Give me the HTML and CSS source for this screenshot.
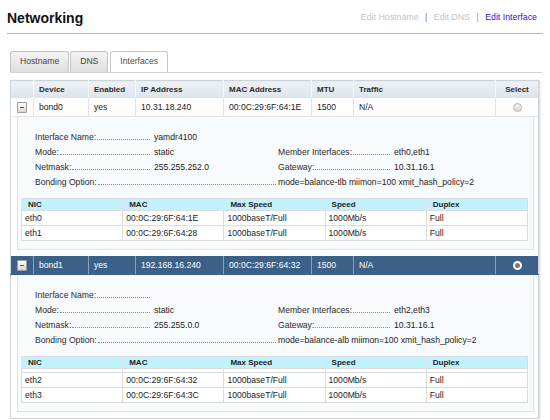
FILE: index.html
```html
<!DOCTYPE html>
<html lang="en">
<head>
    <meta charset="UTF-8">
    <title>Networking</title>
    <link rel="stylesheet" href="styles.css">
</head>
<body>
<div class="page">

    <!-- title + edit links -->
    <div class="page-header">
        <h1>Networking</h1>
        <div class="actions">
            <a class="off">Edit Hostname</a>
            <span class="sep sep-green">|</span>
            <a class="off">Edit DNS</a>
            <span class="sep sep-orange">|</span>
            <a class="on">Edit Interface</a>
        </div>
    </div>

    <!-- tabs -->
    <div class="tabs">
        <div class="tab">Hostname</div>
        <div class="tab">DNS</div>
        <div class="tab active">Interfaces</div>
    </div>

    <!-- interfaces -->
    <table class="iface-table">
        <colgroup>
            <col style="width:23px">
            <col style="width:55px">
            <col style="width:47px">
            <col style="width:88px">
            <col style="width:88px">
            <col style="width:42px">
            <col style="width:142px">
            <col style="width:43px">
        </colgroup>
        <thead>
            <tr>
                <th></th>
                <th>Device</th>
                <th>Enabled</th>
                <th>IP Address</th>
                <th>MAC Address</th>
                <th>MTU</th>
                <th>Traffic</th>
                <th class="center">Select</th>
            </tr>
        </thead>
        <tbody>
            <tr class="dev-row">
                <td class="center"><span class="toggle"></span></td>
                <td>bond0</td>
                <td>yes</td>
                <td>10.31.18.240</td>
                <td>00:0C:29:6F:64:1E</td>
                <td>1500</td>
                <td>N/A</td>
                <td class="center"><span class="radio"></span></td>
            </tr>
            <tr class="detail-row">
                <td colspan="8">
                    <div class="detail">
                        <div class="info">
                            <div class="info-row">
                                <div class="lbl">Interface Name:<i></i></div>
                                <div class="val">yamdr4100</div>
                            </div>
                            <div class="info-row">
                                <div class="lbl">Mode:<i></i></div>
                                <div class="val">static</div>
                                <div class="lbl">Member Interfaces:<i></i></div>
                                <div class="val">eth0,eth1</div>
                            </div>
                            <div class="info-row">
                                <div class="lbl">Netmask:<i></i></div>
                                <div class="val">255.255.252.0</div>
                                <div class="lbl">Gateway:<i></i></div>
                                <div class="val">10.31.16.1</div>
                            </div>
                            <div class="info-row">
                                <div class="lbl wide">Bonding Option:<i></i></div>
                                <div class="val wide">mode=balance-tlb miimon=100 xmit_hash_policy=2</div>
                            </div>
                        </div>
                        <table class="nic-table">
                            <thead>
                                <tr><th>NIC</th><th>MAC</th><th>Max Speed</th><th>Speed</th><th>Duplex</th></tr>
                            </thead>
                            <tbody>
                                <tr><td>eth0</td><td>00:0C:29:6F:64:1E</td><td>1000baseT/Full</td><td>1000Mb/s</td><td>Full</td></tr>
                                <tr><td>eth1</td><td>00:0C:29:6F:64:28</td><td>1000baseT/Full</td><td>1000Mb/s</td><td>Full</td></tr>
                            </tbody>
                        </table>
                    </div>
                </td>
            </tr>

            <tr class="dev-row selected">
                <td class="center"><span class="toggle"></span></td>
                <td>bond1</td>
                <td>yes</td>
                <td>192.168.16.240</td>
                <td>00:0C:29:6F:64:32</td>
                <td>1500</td>
                <td>N/A</td>
                <td class="center"><span class="radio checked"></span></td>
            </tr>
            <tr class="detail-row">
                <td colspan="8">
                    <div class="detail">
                        <div class="info">
                            <div class="info-row">
                                <div class="lbl">Interface Name:<i></i></div>
                                <div class="val"></div>
                            </div>
                            <div class="info-row">
                                <div class="lbl">Mode:<i></i></div>
                                <div class="val">static</div>
                                <div class="lbl">Member Interfaces:<i></i></div>
                                <div class="val">eth2,eth3</div>
                            </div>
                            <div class="info-row">
                                <div class="lbl">Netmask:<i></i></div>
                                <div class="val">255.255.0.0</div>
                                <div class="lbl">Gateway:<i></i></div>
                                <div class="val">10.31.16.1</div>
                            </div>
                            <div class="info-row">
                                <div class="lbl wide">Bonding Option:<i></i></div>
                                <div class="val wide">mode=balance-alb miimon=100 xmit_hash_policy=2</div>
                            </div>
                        </div>
                        <table class="nic-table">
                            <thead>
                                <tr><th>NIC</th><th>MAC</th><th>Max Speed</th><th>Speed</th><th>Duplex</th></tr>
                            </thead>
                            <tbody>
                                <tr class="spacer"><td></td><td></td><td></td><td></td><td></td></tr>
                                <tr><td>eth2</td><td>00:0C:29:6F:64:32</td><td>1000baseT/Full</td><td>1000Mb/s</td><td>Full</td></tr>
                                <tr><td>eth3</td><td>00:0C:29:6F:64:3C</td><td>1000baseT/Full</td><td>1000Mb/s</td><td>Full</td></tr>
                            </tbody>
                        </table>
                    </div>
                </td>
            </tr>
        </tbody>
    </table>

</div>
</body>
</html>
```

FILE: styles.css
```css
body {
    margin: 0;
    background: #ffffff;
    font-family: 'Liberation Sans', Arial, sans-serif;
    font-size: 8.6px;
    color: #222222;
}

.page {
    width: 536px;
    padding: 0 7px;
}

/* header */
.page-header {
    display: flex;
    justify-content: space-between;
    align-items: flex-start;
    height: 33px;
    border-bottom: 1px solid #b4b4b4;
}

h1 {
    margin: 10px 0 0 0;
    font-size: 14px;
    line-height: 16px;
    color: #111111;
}

.actions {
    margin: 12px 6px 0 0;
    line-height: 10px;
    font-size: 8.8px;
}

.actions a.off {
    color: #c4c4c4;
}

.actions a.on {
    color: #1a1ae0;
}

.sep {
    margin: 0 4px;
}

.sep-green {
    color: #6f7d26;
}

.sep-orange {
    color: #d39032;
}

/* tabs */
.tabs {
    display: flex;
    align-items: flex-end;
    margin: 17px 1px 0 3px;
    border-bottom: 1px solid #d4d4d4;
}

.tab {
    height: 20px;
    line-height: 18px;
    padding: 0 9px;
    margin-right: 1px;
    border: 1px solid #c6c6c6;
    border-bottom: none;
    border-radius: 3px 3px 0 0;
    background: linear-gradient(#f4f4f4, #dedede);
    color: #444444;
}

.tab + .tab.active {
    margin-left: 1px;
}

.tab.active {
    background: #ffffff;
    color: #5a4c40;
}

/* interface table */
.iface-table {
    width: 528px;
    margin: 7px 0 0 3px;
    border-collapse: collapse;
    table-layout: fixed;
    border: 1px solid #cdd5dc;
    box-shadow: 1px 1px 2px rgba(0, 0, 0, 0.18);
}

.iface-table > thead th {
    height: 17px;
    padding: 0 5px;
    text-align: left;
    font-size: 8px;
    color: #2a2a2a;
    background: linear-gradient(#eef2f6, #dbe3eb);
    border-left: 1px solid #f6f8fa;
}

.iface-table > thead th:first-child {
    border-left: none;
}

.center {
    text-align: center !important;
}

.dev-row td {
    height: 18px;
    padding: 0 5px;
    border-left: 1px solid #e2e2e2;
    border-bottom: 1px solid #e2e2e2;
    white-space: nowrap;
}

.dev-row td:first-child {
    border-left: none;
    padding: 0;
}

.dev-row.selected td {
    background: #3b6189;
    color: #ffffff;
    border-left-color: #8aa1b9;
    border-bottom-color: #3b6189;
}

.toggle {
    display: inline-block;
    position: relative;
    width: 8px;
    height: 9px;
    vertical-align: middle;
    border: 1px solid #9c9c9c;
    border-radius: 1px;
    background: linear-gradient(#ffffff, #d8d8d8);
}

.toggle::after {
    content: "";
    position: absolute;
    left: 2px;
    top: 4px;
    width: 4px;
    height: 1px;
    background: #555555;
}

.radio {
    display: inline-block;
    width: 7px;
    height: 7px;
    vertical-align: middle;
    border: 1px solid #b9b9b9;
    border-radius: 50%;
    background: linear-gradient(#f2f2f2, #d9d9d9);
}

.radio.checked {
    width: 5px;
    height: 5px;
    border: 2px solid #ffffff;
    background: #7a7a7a;
}

/* detail panel */
.detail-row td {
    padding: 0 4px 6px 6px;
}

.detail {
    padding: 13px 5px 8px 3px;
    border: 1px solid #dce3e9;
    border-top: none;
    background: #f8fbfd;
}

.info {
    margin: 0 0 8px 14px;
}

.info-row {
    display: grid;
    grid-template-columns: 119px 124px 116px 1fr;
    line-height: 15px;
}

.lbl {
    display: flex;
    align-items: baseline;
    padding-right: 4px;
    white-space: nowrap;
    color: #2a2a2a;
}

.lbl i {
    flex: 1;
    height: 0;
    margin-left: 1px;
    border-bottom: 1px dotted #8a8a8a;
}

.lbl.wide {
    grid-column: 1 / 3;
    padding-right: 2px;
}

.val {
    white-space: nowrap;
}

.val.wide {
    grid-column: 3 / 5;
}

.nic-table {
    width: 100%;
    border-collapse: collapse;
    table-layout: fixed;
    border: 1px solid #d8dee3;
}

.nic-table th {
    height: 11px;
    padding: 0 6px;
    text-align: left;
    font-size: 8px;
    background: #c2f2fb;
    border-left: 1px solid #dfe6ea;
}

.nic-table td {
    height: 14px;
    padding: 0 3px;
    background: #ffffff;
    border: 1px solid #dcdcdc;
}

.nic-table tr.spacer td {
    height: 3px;
    padding: 0;
}
```
